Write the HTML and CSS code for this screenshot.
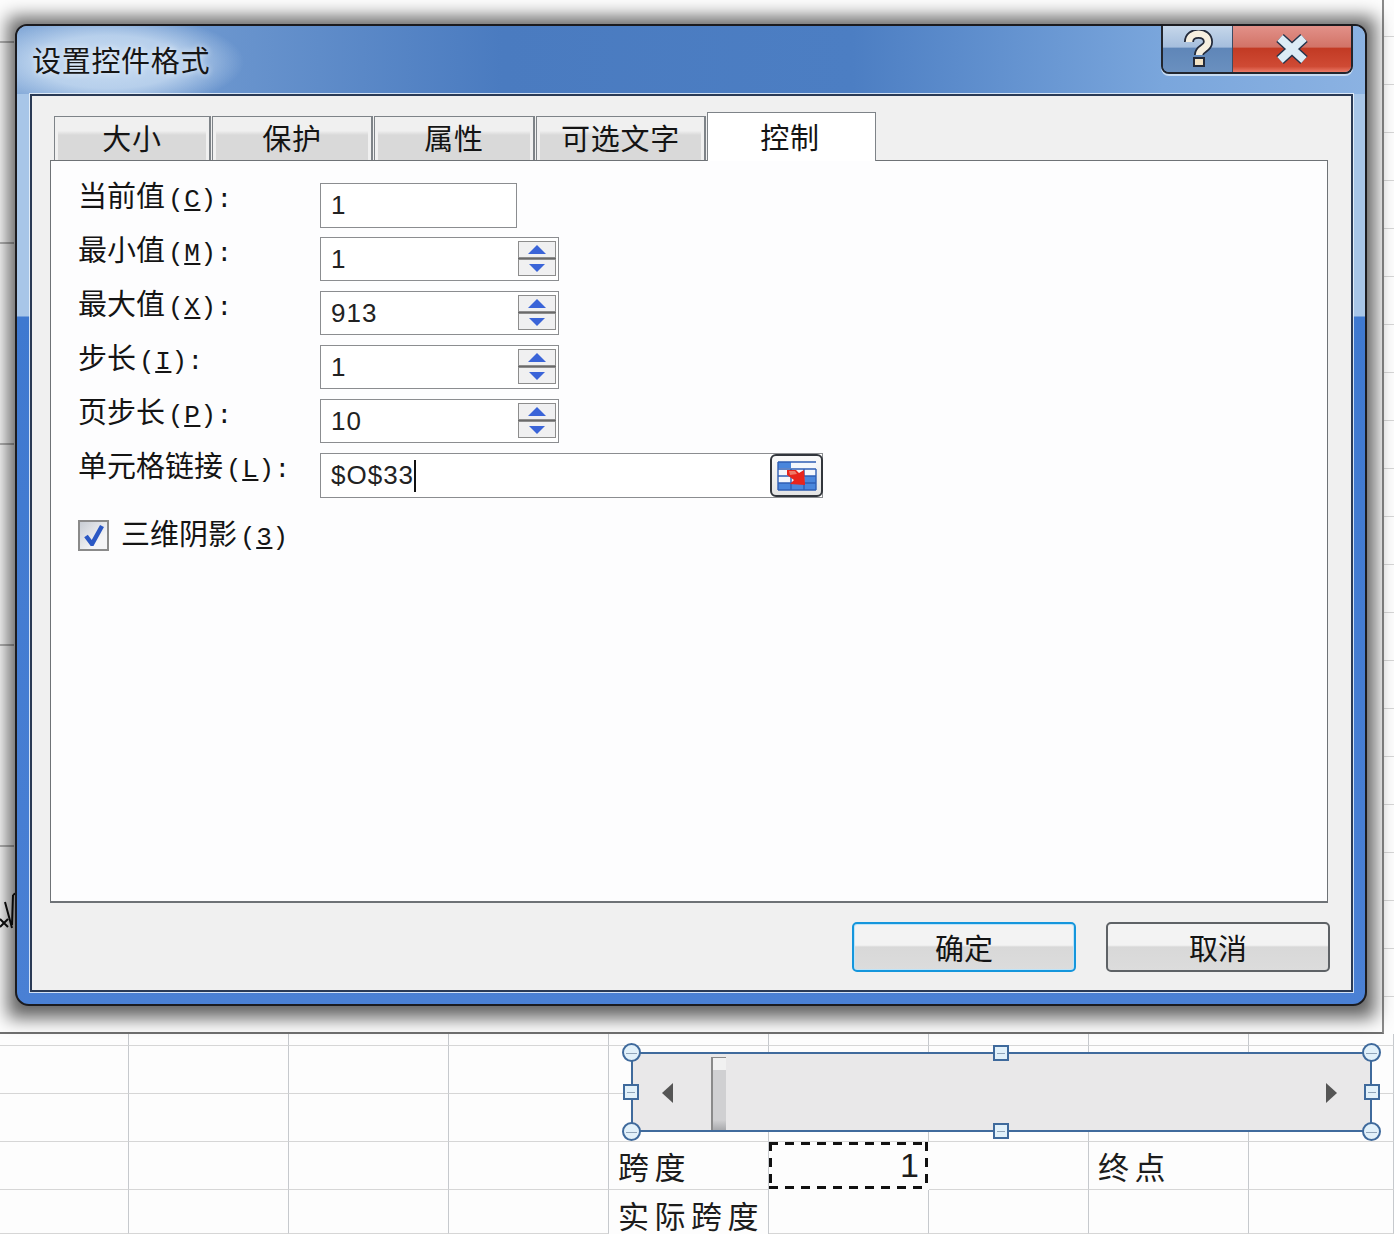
FILE: index.html
```html
<!DOCTYPE html>
<html lang="zh-CN">
<head>
<meta charset="utf-8">
<title>设置控件格式</title>
<link rel="stylesheet" href="styles.css">
</head>
<body>
<div class="desktop">
  <div class="upper">
    <div class="upper-main"></div>
    <div class="upper-side"></div>
  </div>
  <div class="sheet">
    <div class="c"></div><div class="c"></div><div class="c"></div><div class="c"></div><div class="c"></div><div class="c"></div><div class="c"></div><div class="c"></div><div class="c"></div>
    <div class="c"></div><div class="c"></div><div class="c"></div><div class="c"></div><div class="c"></div><div class="c"></div><div class="c"></div><div class="c"></div><div class="c"></div>
    <div class="c"></div><div class="c"></div><div class="c"></div><div class="c"></div><div class="c"></div><div class="c"></div><div class="c"></div><div class="c"></div><div class="c"></div>
    <div class="c"></div><div class="c"></div><div class="c"></div><div class="c"></div><div class="c">跨度</div><div class="c value">1</div><div class="c"></div><div class="c">终点</div><div class="c"></div>
    <div class="c"></div><div class="c"></div><div class="c"></div><div class="c"></div><div class="c tail">实际跨度</div><div class="c"></div><div class="c"></div><div class="c"></div><div class="c"></div>
  </div>

  <svg class="formula-bit" width="20" height="46" viewBox="0 0 20 46"><path d="M0 29l8 8M8 29l-8 8M5 12l7 26M13 5l-1 30M13 5l3-2" fill="none" stroke="#111" stroke-width="2"/></svg>

  <div class="scroll-object">
    <svg class="arrow arrow-left" width="12" height="20" viewBox="0 0 12 20"><path d="M11 0v20L0 10z" fill="#555"/></svg>
    <div class="thumb"></div>
    <svg class="arrow arrow-right" width="12" height="20" viewBox="0 0 12 20"><path d="M1 0v20l11-10z" fill="#555"/></svg>
    <span class="handle round tl"></span><span class="handle round tr"></span>
    <span class="handle round bl"></span><span class="handle round br"></span>
    <span class="handle square tm"></span><span class="handle square bm"></span>
    <span class="handle square ml"></span><span class="handle square mr"></span>
  </div>

  <div class="win-shadow"></div>
  <section class="window">
    <header class="titlebar">
      <h1 class="title">设置控件格式</h1>
      <div class="caption">
        <div class="cap-help">
          <svg width="34" height="38" viewBox="0 0 34 38">
            <path d="M8 12c0-11 19-11 19 0 0 7-9 6-9 13" fill="none" stroke="#232a3a" stroke-width="10"/>
            <path d="M13 28h10v8H13z" fill="#f3e3c4" stroke="#232a3a" stroke-width="2"/>
            <path d="M8 12c0-11 19-11 19 0 0 7-9 6-9 13" fill="none" stroke="#f6efe0" stroke-width="6.5"/>
          </svg>
        </div>
        <div class="cap-close">
          <svg width="36" height="32" viewBox="0 0 36 32">
            <path d="M6 5l24 22M30 5L6 27" stroke="#24344c" stroke-width="11" fill="none"/>
            <path d="M6 5l24 22M30 5L6 27" stroke="#dcecf6" stroke-width="8" fill="none"/>
          </svg>
        </div>
      </div>
    </header>
    <div class="panel">
      <nav class="tabs">
        <div class="tab w1">大小</div>
        <div class="tab w2">保护</div>
        <div class="tab w2">属性</div>
        <div class="tab w3">可选文字</div>
        <div class="tab active">控制</div>
      </nav>
      <div class="pane">
        <div class="row">
          <label class="lbl">当前值<span class="lat">(<u>C</u>):</span></label>
          <div class="field plain"><span class="val">1</span></div>
        </div>
        <div class="row">
          <label class="lbl">最小值<span class="lat">(<u>M</u>):</span></label>
          <div class="field spin"><span class="val">1</span>
            <div class="spinner">
              <div class="sb"><svg width="22" height="10" viewBox="0 0 22 10"><path d="M11 0l9 9H2z" fill="#3a64d8"/></svg></div>
              <div class="sb"><svg width="22" height="10" viewBox="0 0 22 10"><path d="M11 9L3 1h16z" fill="#3a64d8"/></svg></div>
            </div>
          </div>
        </div>
        <div class="row">
          <label class="lbl">最大值<span class="lat">(<u>X</u>):</span></label>
          <div class="field spin"><span class="val">913</span>
            <div class="spinner">
              <div class="sb"><svg width="22" height="10" viewBox="0 0 22 10"><path d="M11 0l9 9H2z" fill="#3a64d8"/></svg></div>
              <div class="sb"><svg width="22" height="10" viewBox="0 0 22 10"><path d="M11 9L3 1h16z" fill="#3a64d8"/></svg></div>
            </div>
          </div>
        </div>
        <div class="row">
          <label class="lbl">步长<span class="lat">(<u>I</u>):</span></label>
          <div class="field spin"><span class="val">1</span>
            <div class="spinner">
              <div class="sb"><svg width="22" height="10" viewBox="0 0 22 10"><path d="M11 0l9 9H2z" fill="#3a64d8"/></svg></div>
              <div class="sb"><svg width="22" height="10" viewBox="0 0 22 10"><path d="M11 9L3 1h16z" fill="#3a64d8"/></svg></div>
            </div>
          </div>
        </div>
        <div class="row">
          <label class="lbl">页步长<span class="lat">(<u>P</u>):</span></label>
          <div class="field spin"><span class="val">10</span>
            <div class="spinner">
              <div class="sb"><svg width="22" height="10" viewBox="0 0 22 10"><path d="M11 0l9 9H2z" fill="#3a64d8"/></svg></div>
              <div class="sb"><svg width="22" height="10" viewBox="0 0 22 10"><path d="M11 9L3 1h16z" fill="#3a64d8"/></svg></div>
            </div>
          </div>
        </div>
        <div class="row">
          <label class="lbl">单元格链接<span class="lat">(<u>L</u>):</span></label>
          <div class="field link"><span class="val">$O$33<i class="caret"></i></span>
            <div class="refbtn">
              <svg width="40" height="30" viewBox="0 0 40 30">
                <rect x="1" y="1" width="38" height="28" fill="#f4f7fc"/>
                <path d="M1 1h13v6H1zM1 22h38v7H1zM28 15h11v7H28z" fill="#4a86dc"/>
                <path d="M1 8h38M1 15h38M1 22h38M1 29h38M1 1h38M14 8v21M27 8v21M1 1v28M39 8v21" fill="none" stroke="#2f5fb4" stroke-width="1.4"/>
                <path d="M10 9h9l3 3 5-3 1 15-15-1 4-4-7-5z" fill="#e8241c"/>
                <path d="M12 10h6l2 3-7 1z" fill="#f07a68"/>
              </svg>
            </div>
          </div>
        </div>
        <div class="check-row">
          <div class="checkbox">
            <svg width="22" height="22" viewBox="0 0 22 22"><path d="M3 12l6 8L19 2" fill="none" stroke="#2b58c4" stroke-width="4.5"/></svg>
          </div>
          <label class="lbl-inline">三维阴影<span class="lat">(<u>3</u>)</span></label>
        </div>
      </div>
      <footer class="actions">
        <button class="btn default">确定</button>
        <button class="btn">取消</button>
      </footer>
    </div>
  </section>
</div>
</body>
</html>
```
FILE: styles.css
```css
* { box-sizing: border-box; }
html, body { margin: 0; padding: 0; background: #fdfdfd; }
.desktop {
  position: relative;
  width: 1394px;
  height: 1234px;
  overflow: hidden;
  font-family: "Noto Sans CJK SC", "Liberation Sans", sans-serif;
  color: #141414;
  background: #fdfdfd;
}

/* sheet behind the dialog */
.upper { display: flex; height: 1034px; }
.upper-main {
  width: 1384px;
  border-right: 2px solid #8a8a8a;
  border-bottom: 2px solid #707070;
  background:
    repeating-linear-gradient(180deg, transparent 0 41px, #b5b5b5 41px 43px, transparent 43px 201px) left top / 14px 100% no-repeat,
    #fdfdfd;
}
.upper-side {
  flex: 1;
  background: repeating-linear-gradient(180deg, transparent 0 36px, #d6d6d6 36px 37px, transparent 37px 48px);
}
.sheet {
  display: grid;
  grid-template-columns: 129px repeat(7, 160px) 1fr;
  grid-template-rows: 12px repeat(3, 48px) 44px;
}
.sheet { grid-auto-rows: 48px; }
.c {
  border-right: 1px solid #c6c9cd;
  border-bottom: 1px solid #d6d6d6;
  font-size: 31px;
  line-height: 47px;
  letter-spacing: 5.5px;
  padding-left: 9px;
  white-space: nowrap;
  color: #1c1c1c;
}
.tail { line-height: 31px; padding-top: 9px; border-bottom: 0; }
.value {
  border-color: transparent;
  background:
    repeating-linear-gradient(90deg, #111 0 9px, transparent 9px 16px) left top / 100% 3px no-repeat,
    repeating-linear-gradient(90deg, #111 0 9px, transparent 9px 16px) left bottom / 100% 3px no-repeat,
    repeating-linear-gradient(180deg, #111 0 9px, transparent 9px 16px) left top / 3px 100% no-repeat,
    repeating-linear-gradient(180deg, #111 0 9px, transparent 9px 16px) right top / 3px 100% no-repeat;
  text-align: right;
  padding-right: 9px;
  letter-spacing: 0;
  font-family: "Liberation Sans", sans-serif;
  font-size: 34px;
}
.formula-bit { position: absolute; left: 0; top: 890px; }

/* scrollbar form control */
.scroll-object {
  position: absolute;
  left: 631px;
  top: 1052px;
  width: 741px;
  height: 80px;
  background: #e9e8e9;
  border: 2px solid #3f6a9c;
}
.arrow { position: absolute; top: 29px; }
.arrow-left { left: 29px; }
.arrow-right { right: 33px; }
.thumb {
  position: absolute;
  left: 78px;
  top: 3px;
  width: 15px;
  height: 73px;
  border-left: 2px solid #8a8a8a;
  border-top: 1px solid #8a8a8a;
  background: linear-gradient(180deg, #f1f1f1 0 12px, #d0d0d2 12px 62px, #a9aaad 100%);
}
.handle { position: absolute; background: #e2f1fa; border: 2px solid #3f6a9c; }
.handle::after { content: ""; position: absolute; left: 2px; right: 2px; top: 50%; height: 1px; background: #8fa3b8; }
.round { width: 19px; height: 19px; border-radius: 50%; }
.square { width: 16px; height: 16px; }
.tl { left: -11px; top: -11px; }
.tr { right: -11px; top: -11px; }
.bl { left: -11px; bottom: -11px; }
.br { right: -11px; bottom: -11px; }
.tm { left: 360px; top: -9px; }
.bm { left: 360px; bottom: -9px; }
.ml { left: -10px; top: 30px; }
.mr { right: -10px; top: 30px; }

/* dialog window */
.win-shadow {
  position: absolute;
  left: 8px;
  top: 17px;
  width: 1367px;
  height: 1001px;
  background: rgba(0, 0, 0, .62);
  filter: blur(9px);
}
.window {
  position: absolute;
  left: 15px;
  top: 24px;
  width: 1352px;
  height: 982px;
  display: flex;
  flex-direction: column;
  border: 2px solid #1b1b1f;
  border-radius: 12px 12px 14px 14px;
  background: linear-gradient(180deg, #a8c6e8 0, #a8c6e8 290px, #3f79d0 291px, #4a80d4 100%);
}
.titlebar {
  flex: none;
  height: 68px;
  display: flex;
  justify-content: space-between;
  align-items: flex-start;
  border-radius: 10px 10px 0 0;
  background:
    radial-gradient(ellipse 135px 48px at 92px 36px, rgba(205, 224, 244, .95) 0, rgba(205, 224, 244, .75) 55%, rgba(205, 224, 244, 0) 100%),
    linear-gradient(90deg, #7ea5d6 0, #6f99d0 12%, #4a7bc0 36%, #4c7ec3 62%, #7aa6dc 85%, #8bb2e2 100%);
}
.title {
  margin: 13px 0 0 15px;
  font-size: 29px;
  line-height: 40px;
  font-weight: 400;
  letter-spacing: .7px;
  color: #161616;
  text-shadow: 0 0 6px rgba(255, 255, 255, .8);
}
.caption {
  display: flex;
  margin-right: 12px;
  height: 48px;
  border: 2px solid #22262e;
  border-top: 0;
  border-radius: 0 0 8px 8px;
  overflow: hidden;
  box-shadow: 0 2px 0 #c8dcf2;
}
.cap-help {
  width: 70px;
  display: flex;
  align-items: center;
  justify-content: center;
  border-right: 1px solid #3d4c63;
  background: linear-gradient(180deg, #c6d7ea 0, #a5bedd 46%, #5f86b8 48%, #6a90bf 100%);
}
.cap-close {
  width: 118px;
  display: flex;
  align-items: center;
  justify-content: center;
  background: linear-gradient(180deg, #e29189 0, #d27367 46%, #c23a24 48%, #cf4a34 88%, #ea7a68 100%);
}
.panel {
  flex: 1;
  display: flex;
  flex-direction: column;
  margin: 0 12px 12px 13px;
  background: #f0f0f0;
  border: 2px solid #2a3a55;
  box-shadow: 0 0 0 1px rgba(235, 243, 252, .85);
  padding: 17px 23px 0 18px;
}

/* tabs */
.tabs { display: flex; align-items: flex-end; height: 47px; padding-left: 4px; position: relative; z-index: 1; }
.tab {
  height: 44px;
  margin-right: 1px;
  border: 1px solid #7e8388;
  border-bottom: 0;
  border-right-width: 2px;
  background: linear-gradient(180deg, #f0f0f0 0 32%, #d9d9d9 42% 100%);
  box-shadow: inset 3px 0 0 #f0f0f0, inset -3px 0 0 #f0f0f0;
  font-size: 29px;
  line-height: 41px;
  letter-spacing: .8px;
  text-align: center;
}
.w1 { width: 157px; }
.w2 { width: 161px; }
.w3 { width: 170px; }
.active {
  width: 169px;
  height: 49px;
  margin-bottom: -1px;
  padding-right: 3px;
  background: #fff;
  box-shadow: none;
  line-height: 47px;
  border-right-width: 1px;
}

/* tab pane */
.pane {
  flex: none;
  height: 743px;
  background: #fdfdfe;
  border: 1px solid #6e7276;
  border-bottom-width: 2px;
  padding: 22px 0 0 27px;
}
.row { display: flex; align-items: flex-start; height: 54px; }
.lbl { width: 242px; font-size: 29px; line-height: 22px; white-space: nowrap; }
.lat {
  font-family: "Liberation Mono", monospace;
  font-size: 26px;
  letter-spacing: .6px;
  margin-left: 3px;
}
.field {
  position: relative;
  display: flex;
  align-items: center;
  background: #fff;
  border: 1px solid #8b8d90;
  height: 44px;
  padding-left: 10px;
}
.plain { width: 197px; height: 45px; }
.spin { width: 239px; }
.link { width: 503px; height: 45px; }
.val {
  font-family: "Liberation Sans", sans-serif;
  font-size: 26px;
  letter-spacing: 1px;
  color: #222;
  display: flex;
  align-items: center;
}
.caret { display: block; width: 2px; height: 32px; background: #111; }
.spinner {
  position: absolute;
  right: 2px;
  top: 3px;
  width: 38px;
  display: flex;
  flex-direction: column;
  gap: 1px;
  background: #6a6a6a;
}
.sb {
  height: 17px;
  border: 1px solid #8d8d8d;
  background: #f0f0f1;
  display: flex;
  align-items: center;
  justify-content: center;
}
.refbtn {
  position: absolute;
  right: -1px;
  top: 0;
  width: 53px;
  height: 43px;
  background: linear-gradient(180deg, #fafafa, #e4e4e4);
  border: 2px solid #32363c;
  border-radius: 6px;
  display: flex;
  align-items: center;
  justify-content: center;
}
.check-row { display: flex; align-items: center; margin-top: 12px; height: 32px; }
.checkbox {
  width: 31px;
  height: 31px;
  border: 2px solid #8a8a8a;
  background: linear-gradient(135deg, #c8cdd4, #f4f4f6 70%);
  display: flex;
  align-items: center;
  justify-content: center;
}
.lbl-inline { margin-left: 12px; font-size: 29px; line-height: 32px; white-space: nowrap; }

/* footer buttons */
.actions { flex: 1; display: flex; justify-content: flex-end; align-items: flex-start; gap: 30px; padding-top: 19px; margin-right: -2px; }
.btn {
  width: 224px;
  height: 50px;
  padding: 0;
  font-family: inherit;
  font-size: 29px;
  line-height: 46px;
  color: #141414;
  border: 2px solid #5e6266;
  border-radius: 5px;
  background: linear-gradient(180deg, #f3f3f3 0 46%, #d8d8d8 50%, #dcdcdc 100%);
}
.default { border-color: #1596dc; box-shadow: inset 0 0 0 1px #bfe4f8; }
```
